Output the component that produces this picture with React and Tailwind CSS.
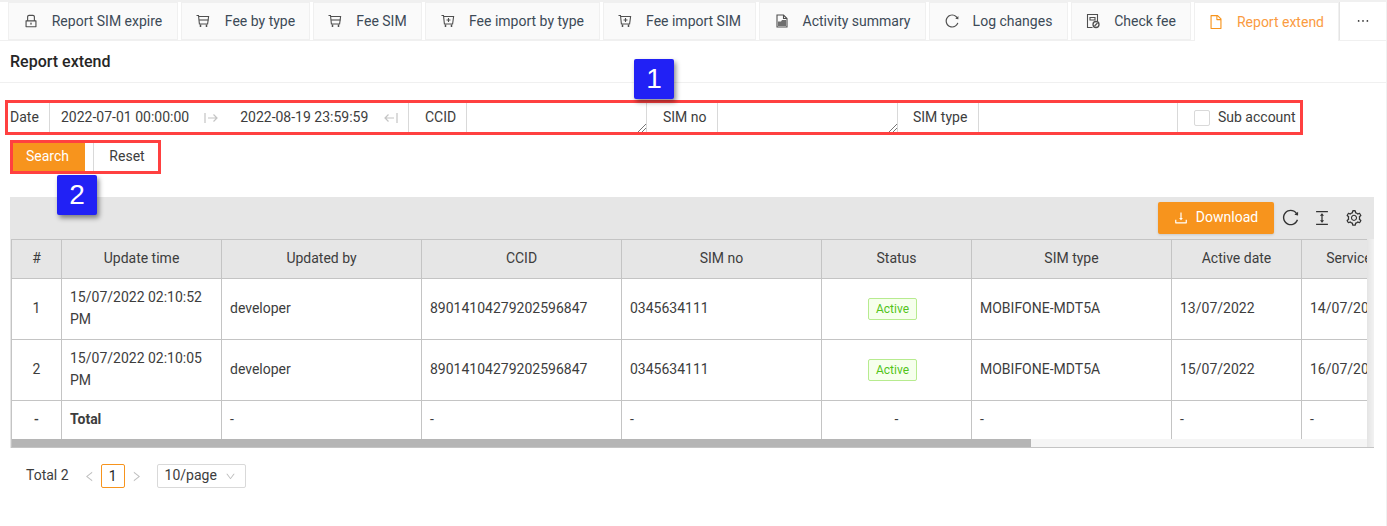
import {
  AiOutlineLock,
  AiOutlineFile,
  AiOutlineReload,
  AiOutlineDownload,
  AiOutlineColumnHeight,
  AiOutlineSetting,
  AiOutlineEllipsis,
  AiOutlineLeft,
  AiOutlineRight,
  AiOutlineDown,
} from 'react-icons/ai';

const Cart = ({ plus }) => (
  <svg viewBox="0 0 16 16" className="w-4 h-4" fill="none" stroke="#4f4f4f" strokeWidth="1.100">
    <path d="M1.500 2.500h2l.9 8.500h8.200l1-7.500H3.700" />
    {plus ? <path d="M8.500 5v4M6.500 7h4" /> : <path d="M4.100 7h9.300" />}
    <path d="M5.500 11.500v2.500M11.500 11.500v2.500" strokeWidth="1.500" />
  </svg>
);

const FileChart = () => (
  <svg viewBox="0 0 16 16" className="w-4 h-4" fill="none" stroke="#4f4f4f" strokeWidth="1.100">
    <path d="M3 2h6.500L13 5.500V14H3z" />
    <path d="M9.500 2v3.500H13" />
    <path d="M4 8.500h3l1-1.500h4v6H4z" fill="#6f6f6f" stroke="none" />
  </svg>
);

const FileCheck = () => (
  <svg viewBox="0 0 16 16" className="w-4 h-4" fill="none" stroke="#4f4f4f" strokeWidth="1.100">
    <path d="M7.500 14.500H2.500v-13h10V8" />
    <path d="M5 4.500h5v2.500H5z" />
    <circle cx="11" cy="11.500" r="3" strokeWidth="1.300" />
    <path d="M9.500 13l3-3" />
  </svg>
);

const ArrowIn = ({ flip }) => (
  <svg viewBox="0 0 14 12" className={`w-[14px] h-3 ${flip ? 'rotate-180' : ''}`} fill="none" stroke="#c4c4c4" strokeWidth="1.200">
    <path d="M1 1v10M4 6h9M9.500 2.500L13 6l-3.500 3.500" />
  </svg>
);

const tabs = [
  { label: 'Report SIM expire', w: 'w-[170px]', icon: <AiOutlineLock size={16} /> },
  { label: 'Fee by type', w: 'w-[129px]', gap: 'gap-[14px]', icon: <Cart /> },
  { label: 'Fee SIM', w: 'w-[109px]', icon: <Cart /> },
  { label: 'Fee import by type', w: 'w-[175px]', icon: <Cart plus /> },
  { label: 'Fee import SIM', w: 'w-[153px]', icon: <Cart plus /> },
  { label: 'Activity summary', w: 'w-[167px]', icon: <FileChart /> },
  { label: 'Log changes', w: 'w-[139px]', icon: <AiOutlineReload size={16} /> },
  { label: 'Check fee', w: 'w-[120px]', icon: <FileCheck /> },
];

const columns = [
  { label: '#', w: 'w-[50px]' },
  { label: 'Update time', w: 'w-[160px]' },
  { label: 'Updated by', w: 'w-[200px]' },
  { label: 'CCID', w: 'w-[200px]' },
  { label: 'SIM no', w: 'w-[200px]' },
  { label: 'Status', w: 'w-[150px]' },
  { label: 'SIM type', w: 'w-[200px]' },
  { label: 'Active date', w: 'w-[130px]' },
  { label: 'Service date', w: 'w-[126px]' },
];

const rows = [
  { no: 1, time: '15/07/2022 02:10:52 PM', active: '13/07/2022', service: '14/07/2022' },
  { no: 2, time: '15/07/2022 02:10:05 PM', active: '15/07/2022', service: '16/07/2022' },
];

const frame = 'border-r border-b border-[#c4c4c4] px-2 text-left';
const cell = `${frame} pb-[2px]`;

const Resizer = () => (
  <svg viewBox="0 0 9 9" className="absolute right-0 bottom-0 w-[9px] h-[9px]" stroke="#777" strokeWidth="1">
    <path d="M1 9l8-8M5 9l4-4" />
  </svg>
);

const Label = ({ className, children }) => (
  <div className={`h-[29px] flex items-center border-r border-[#d9d9d9] shrink-0 ${className}`}>
    {children}
  </div>
);

export default function App() {
  return (
    <div className="relative h-[526px] w-[1387px] overflow-hidden bg-white text-[14px] text-[#3d3d3d] font-['Roboto',sans-serif] border-r border-[#f0f0f0]">
      {/* tab bar */}
      <div className="h-[41px] bg-white border-t-2 border-b border-[#f0f0f0] flex pl-2">
        <div className="flex gap-[3px]">
          {tabs.map((t) => (
            <div
              key={t.label}
              className={`${t.w} ${t.gap || 'gap-[13px]'} h-[38px] bg-[#fafafa] border border-[#f0f0f0] flex items-center justify-center pr-[1px] text-[#4f4f4f]`}
            >
              {t.icon}
              <span className="text-[#3d4a57]">{t.label}</span>
            </div>
          ))}
          <div className="w-[145px] h-[39px] bg-white border border-b-0 border-[#f0f0f0] flex items-center justify-center gap-[13px] pr-[1px] text-[#f7941d]">
            <AiOutlineFile size={16} />
            <span className="text-[#fa9b3f]">Report extend</span>
          </div>
        </div>
        <div className="flex-1 h-[38px] flex items-center justify-center border-l border-[#e4e4e4] text-[#333]">
          <AiOutlineEllipsis size={16} />
        </div>
      </div>

      {/* title */}
      <div className="h-[42px] flex items-center pl-[10px] border-b border-[#f0f0f0] text-[16px] leading-none font-medium text-[#262626]">
        Report extend
      </div>

      {/* filters */}
      <div className="ml-[5px] mt-[17px] w-[1298px] h-[35px] border-[3px] border-[#ff4040] flex items-center">
        <Label className="w-[42px] pl-[2px]">Date</Label>
        <div className="w-[359px] h-[29px] flex items-center border-r border-[#d9d9d9] shrink-0">
          <span className="ml-[11px]">2022-07-01 00:00:00</span>
          <span className="ml-[15px] flex"><ArrowIn /></span>
          <span className="ml-[22px]">2022-08-19 23:59:59</span>
          <span className="ml-[16px] flex"><ArrowIn flip /></span>
        </div>
        <Label className="w-[58px] pl-[16px]">CCID</Label>
        <div className="relative w-[180px] h-[29px] border-r border-[#d9d9d9] shrink-0"><Resizer /></div>
        <Label className="w-[71px] pl-[16px]">SIM no</Label>
        <div className="relative w-[180px] h-[29px] border-r border-[#d9d9d9] shrink-0"><Resizer /></div>
        <Label className="w-[81px] pl-[15px]">SIM type</Label>
        <div className="w-[199px] h-[29px] border-r border-[#d9d9d9] shrink-0" />
        <div className="flex items-center ml-[16px] gap-[8px]">
          <span className="w-4 h-4 border border-[#d9d9d9] rounded-[2px] bg-white" />
          <span>Sub account</span>
        </div>
      </div>

      {/* buttons */}
      <div className="ml-[10px] mt-[5px] w-[151px] h-[34px] border-[3px] border-[#ff4040] flex">
        <button className="w-[72px] h-[28px] bg-[#f7941d] text-white pr-[3px] pb-[2px]">Search</button>
        <button className="ml-[8px] w-[65px] h-[28px] border-l border-[#d9d9d9] bg-white pl-[2px] pb-[2px]">Reset</button>
      </div>

      {/* toolbar + table */}
      <div className="ml-[10px] mt-[23px] w-[1364px] bg-[#e6e6e6]">
        <div className="h-[42px] flex items-center justify-end pb-[1px]">
          <button className="w-[116px] h-[32px] bg-[#f7941d] text-white rounded-[2px] flex items-center justify-center gap-[7px] pr-[1px] shadow-sm">
            <AiOutlineDownload size={16} />
            <span>Download</span>
          </button>
          <AiOutlineReload size={19} className="ml-[7px] text-[#333]" />
          <AiOutlineColumnHeight size={18} className="ml-[13px] text-[#333]" />
          <AiOutlineSetting size={18} className="ml-[14px] mr-[11px] text-[#333]" />
        </div>

        <div className="bg-white border-l border-b border-[#c4c4c4] ml-[1px] relative">
          <div className="w-[1355px] h-[200px] overflow-hidden">
            <table className="table-fixed border-separate border-spacing-0 w-[1416px] border-t border-[#c4c4c4]">
              <thead>
                <tr className="h-[39px] bg-[#e6e6e6]">
                  {columns.map((c) => (
                    <th key={c.label} className={`${c.w} ${cell} font-normal !text-center`}>{c.label}</th>
                  ))}
                </tr>
              </thead>
              <tbody>
                {rows.map((r) => (
                  <tr key={r.no} className="h-[61px]">
                    <td className={`${cell} !text-center`}>{r.no}</td>
                    <td className={`${cell} leading-[22px]`}>{r.time}</td>
                    <td className={cell}>developer</td>
                    <td className={cell}>89014104279202596847</td>
                    <td className={cell}>0345634111</td>
                    <td className={`${frame} !text-center`}>
                      <span className="inline-block h-[22px] leading-[20px] mr-[8px] px-[7px] text-[12px] border border-[#b7eb8f] bg-[#f6ffed] text-[#52c41a] rounded-[2px]">Active</span>
                    </td>
                    <td className={cell}>MOBIFONE-MDT5A</td>
                    <td className={cell}>{r.active}</td>
                    <td className={cell}>{r.service}</td>
                  </tr>
                ))}
                <tr className="h-[39px]">
                  <td className={`${cell} !text-center font-medium`}>-</td>
                  <td className={`${cell} font-bold`}>Total</td>
                  <td className={cell}>-</td>
                  <td className={cell}>-</td>
                  <td className={cell}>-</td>
                  <td className={`${cell} !text-center`}>-</td>
                  <td className={cell}>-</td>
                  <td className={cell}>-</td>
                  <td className={cell}>-</td>
                </tr>
              </tbody>
            </table>
          </div>
          {/* scrollbars */}
          <div className="h-[8px] bg-[#f5f5f5]">
            <div className="h-[8px] w-[1019px] bg-[#b5b5b5]" />
          </div>
          <div className="absolute right-0 top-0 bottom-0 w-[7px] bg-gradient-to-r from-[#e4e4e4] to-[#f2f2f2]" />
        </div>
      </div>

      {/* pagination */}
      <div className="flex items-center ml-[26px] mt-[16px] h-[24px]">
        <span className="pb-[2px]">Total 2</span>
        <AiOutlineLeft size={13} className="ml-[14px] text-[#bfbfbf]" />
        <span className="ml-[5px] w-6 h-6 flex items-center justify-center border border-[#f7941d] rounded-[2px] text-[#262626]">1</span>
        <AiOutlineRight size={13} className="ml-[5px] text-[#bfbfbf]" />
        <div className="ml-[14px] w-[89px] h-6 border border-[#d9d9d9] rounded-[2px] flex items-center pl-[7px] gap-[8px]">
          <span className="pb-[2px]">10/page</span>
          <AiOutlineDown size={11} className="text-[#bfbfbf]" />
        </div>
      </div>

      {/* numbered callouts */}
      <div className="absolute left-[634px] top-[59px] w-10 h-10 rounded-[2px] bg-[#2121f5] text-white text-[28px] flex items-center justify-center font-['Liberation_Sans',sans-serif] shadow-[2px_3px_5px_rgba(0,0,0,0.45)]">1</div>
      <div className="absolute left-[57px] top-[175px] w-10 h-10 rounded-[2px] bg-[#2121f5] text-white text-[28px] flex items-center justify-center font-['Liberation_Sans',sans-serif] shadow-[2px_3px_5px_rgba(0,0,0,0.45)]">2</div>
    </div>
  );
}
